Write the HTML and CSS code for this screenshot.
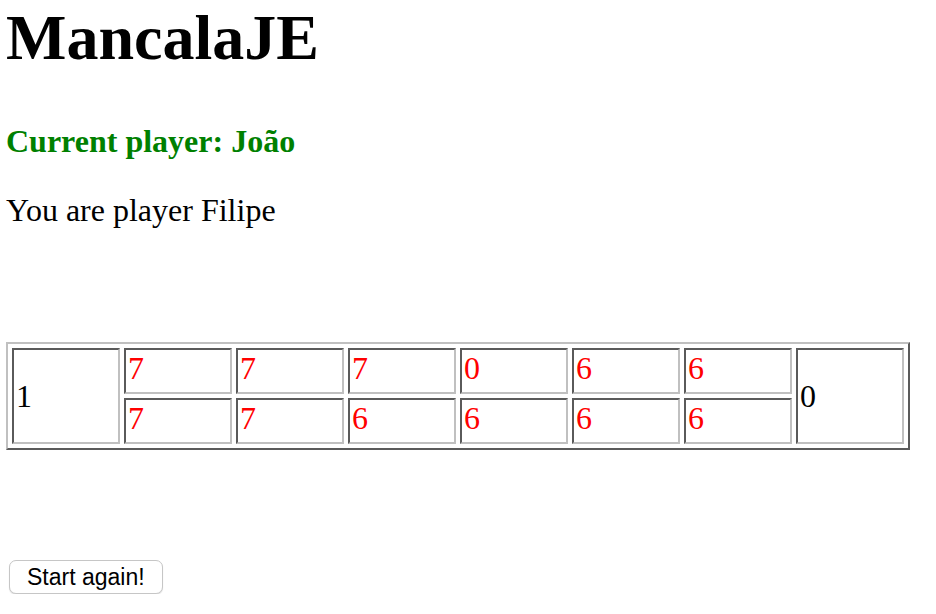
FILE: index.html
```html
<!DOCTYPE html>
<html>
<head>
<meta charset="utf-8">
<title>MancalaJE</title>
<link rel="stylesheet" href="styles.css">
</head>
<body>
<div class="page">
  <h1 class="title">MancalaJE</h1>
  <h4 class="current">Current player: João</h4>
  <p class="you">You are player Filipe</p>
  <table class="board">
    <tr>
      <td class="store" rowspan="2">1</td>
      <td class="pit">7</td>
      <td class="pit">7</td>
      <td class="pit">7</td>
      <td class="pit">0</td>
      <td class="pit">6</td>
      <td class="pit">6</td>
      <td class="store" rowspan="2">0</td>
    </tr>
    <tr>
      <td class="pit">7</td>
      <td class="pit">7</td>
      <td class="pit">6</td>
      <td class="pit">6</td>
      <td class="pit">6</td>
      <td class="pit">6</td>
    </tr>
  </table>
  <div class="actions">
    <button class="restart" type="button">Start again!</button>
  </div>
</div>
</body>
</html>
```
FILE: styles.css
```css
html, body {
  margin: 0;
  padding: 0;
  background: #ffffff;
}

body {
  font-family: "Liberation Serif", "Times New Roman", serif;
  font-size: 32px;
  color: #000000;
}

.page {
  padding: 2px 6px 0 6px;
}

.title {
  margin: 0;
  font-size: 64px;
  line-height: 72px;
  font-weight: bold;
}

.current {
  margin: 49px 0 0 0;
  font-size: 32px;
  line-height: 37px;
  font-weight: bold;
  color: #008000;
}

.you {
  margin: 32px 0 0 0;
  font-size: 32px;
  line-height: 37px;
}

.board {
  margin-top: 113px;
  border-collapse: separate;
  border-spacing: 4px;
  border-style: solid;
  border-width: 2px;
  border-color: #c0c0c0 #5a5a5a #5a5a5a #c0c0c0;
  table-layout: fixed;
  width: 904px;
}

.board td {
  box-sizing: border-box;
  width: 108px;
  padding: 2px;
  border-style: solid;
  border-width: 2px;
  border-color: #5a5a5a #c0c0c0 #c0c0c0 #5a5a5a;
  font-size: 32px;
  line-height: 33px;
}

.pit {
  height: 46px;
  vertical-align: top;
  color: #ff0000;
}

.store {
  vertical-align: middle;
  color: #000000;
}

.actions {
  display: flex;
  margin-top: 110px;
}

.restart {
  margin: 0 0 0 3px;
  height: 34px;
  padding: 0 17px;
  font-family: "Liberation Sans", Arial, sans-serif;
  font-size: 23px;
  line-height: 26px;
  color: #000000;
  background: #ffffff;
  border: 1px solid #c6c6c6;
  border-radius: 7px;
  box-shadow: 0 1px 1px rgba(0, 0, 0, 0.12);
}
```
